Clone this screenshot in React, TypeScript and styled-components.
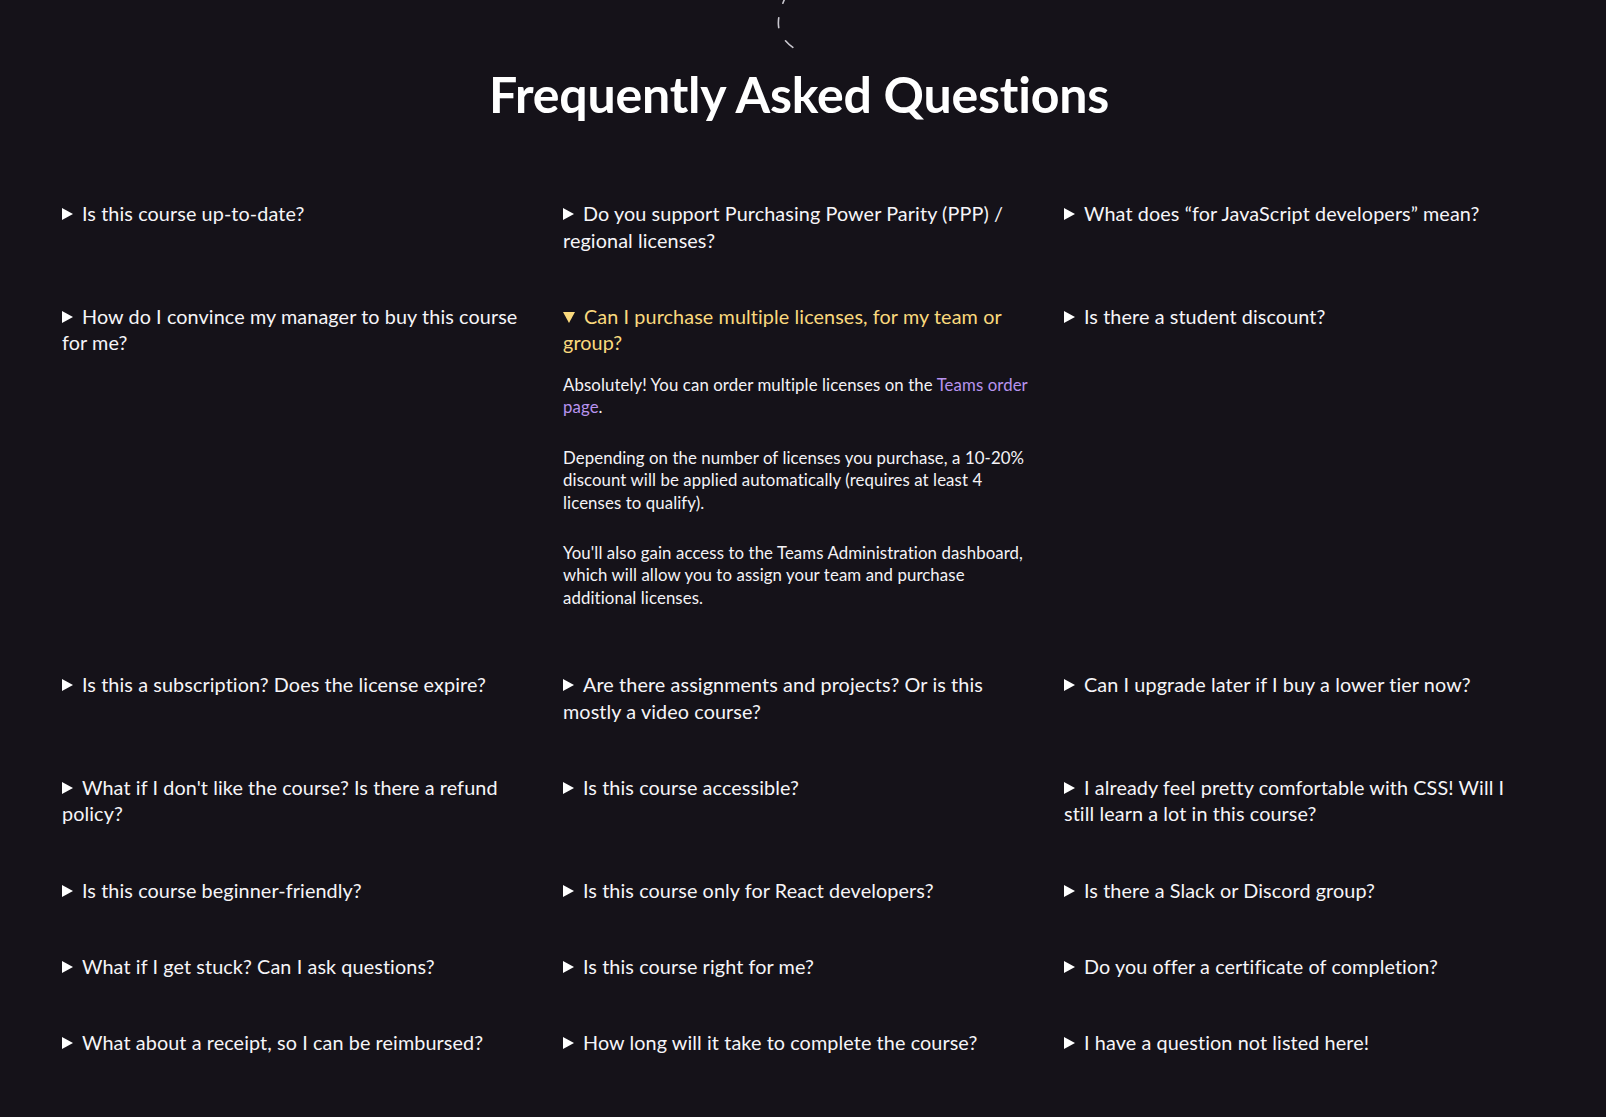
import React from 'react';
import styled, { createGlobalStyle } from 'styled-components';

const GlobalStyle = createGlobalStyle`
  html, body {
    margin: 0;
    padding: 0;
    background: #151219;
  }
  body {
    font-family: Lato, 'Noto Sans', sans-serif;
    color: #fff;
  }
`;

type Question = {
  title: string;
  open?: boolean;
};

const QUESTIONS: Question[] = [
  { title: 'Is this course up-to-date?' },
  { title: 'Do you support Purchasing Power Parity (PPP) / regional licenses?' },
  { title: 'What does \u201cfor JavaScript developers\u201d mean?' },
  { title: 'How do I convince my manager to buy this course for me?' },
  { title: 'Can I purchase multiple licenses, for my team or group?', open: true },
  { title: 'Is there a student discount?' },
  { title: 'Is this a subscription? Does the license expire?' },
  { title: 'Are there assignments and projects? Or is this mostly a video course?' },
  { title: 'Can I upgrade later if I buy a lower tier now?' },
  { title: "What if I don't like the course? Is there a refund policy?" },
  { title: 'Is this course accessible?' },
  { title: 'I already feel pretty comfortable with CSS! Will I still learn a lot in this course?' },
  { title: 'Is this course beginner-friendly?' },
  { title: 'Is this course only for React developers?' },
  { title: 'Is there a Slack or Discord group?' },
  { title: 'What if I get stuck? Can I ask questions?' },
  { title: 'Is this course right for me?' },
  { title: 'Do you offer a certificate of completion?' },
  { title: 'What about a receipt, so I can be reimbursed?' },
  { title: 'How long will it take to complete the course?' },
  { title: 'I have a question not listed here!' },
];

const Section = styled.section`
  position: relative;
  min-height: 1117px;
  padding: 64px 70px 40px 62px;
  box-sizing: border-box;
`;

const Squiggle = styled.svg`
  position: absolute;
  top: 0;
  left: 760px;
  width: 50px;
  height: 60px;
  overflow: visible;
`;

const Heading = styled.h2`
  margin: 0 0 76px;
  text-align: center;
  font-size: 50px;
  line-height: 1.2;
  font-weight: 700;
  letter-spacing: -0.2px;
  color: #fff;
`;

const Grid = styled.div`
  display: grid;
  grid-template-columns: repeat(3, 468px);
  column-gap: 33px;
  row-gap: 49.5px;
  align-items: start;
`;

const Item = styled.details`
  font-size: 19.8px;
  line-height: 26.6px;
  letter-spacing: 0.1px;
`;

const Summary = styled.summary<{ $open?: boolean }>`
  cursor: pointer;
  color: ${(p) => (p.$open ? '#fad97d' : '#f6f5f8')};
  list-style: none;

  &::-webkit-details-marker {
    display: none;
  }

  &::before {
    content: '';
    display: inline-block;
    width: 0;
    height: 0;
    margin-right: 9px;
    vertical-align: 1px;
    ${(p) =>
      p.$open
        ? `
      border-left: 6px solid transparent;
      border-right: 6px solid transparent;
      border-top: 11px solid #fad97d;
    `
        : `
      border-top: 6px solid transparent;
      border-bottom: 6px solid transparent;
      border-left: 11px solid #fff;
    `}
  }
`;

const Answer = styled.div`
  margin-top: 18px;
  padding-bottom: 12px;
  font-size: 16.8px;
  line-height: 22.6px;
  letter-spacing: 0.1px;
  color: #f4f3f7;
`;

const Para = styled.p`
  margin: 0 0 27.5px;

  &:last-child {
    margin-bottom: 0;
  }
`;

const Link = styled.a`
  color: #b893ee;
  text-decoration: none;
`;

function TeamsAnswer() {
  return (
    <Answer>
      <Para>
        Absolutely! You can order multiple licenses on the{' '}
        <Link href="#teams">Teams order page</Link>.
      </Para>
      <Para>
        Depending on the number of licenses you purchase, a 10-20% discount will
        be applied automatically (requires at least 4 licenses to qualify).
      </Para>
      <Para>
        You'll also gain access to the Teams Administration dashboard, which will
        allow you to assign your team and purchase additional licenses.
      </Para>
    </Answer>
  );
}

export default function App() {
  return (
    <>
      <GlobalStyle />
      <Section>
        <Squiggle viewBox="0 0 50 60">
          <path
            d="M 27 -6 Q 16 16 19 29 Q 23 42 37 50"
            fill="none"
            stroke="#c9c7cf"
            strokeWidth="1.6"
            strokeLinecap="round"
            strokeDasharray="10 15"
          />
        </Squiggle>
        <Heading>Frequently Asked Questions</Heading>
        <Grid>
          {QUESTIONS.map((q) => (
            <Item key={q.title} open={q.open}>
              <Summary $open={q.open}>{q.title}</Summary>
              {q.open && <TeamsAnswer />}
            </Item>
          ))}
        </Grid>
      </Section>
    </>
  );
}
